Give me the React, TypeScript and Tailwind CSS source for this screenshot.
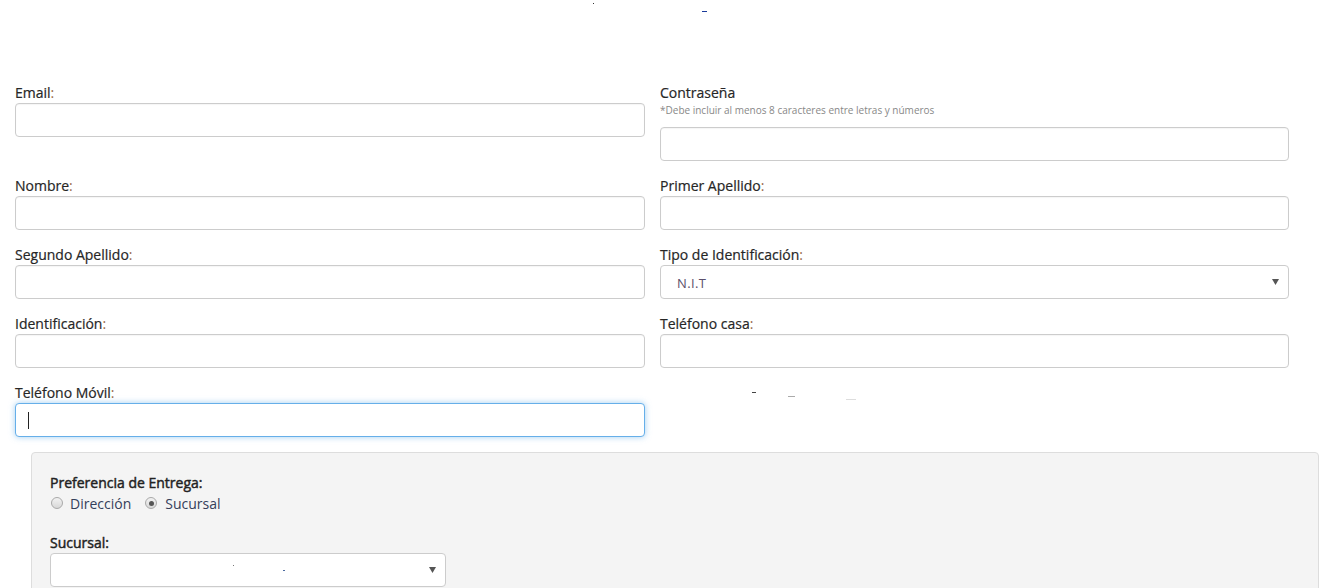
import React from "react";

const Arrow = () => (
  <svg width="7" height="6" viewBox="0 0 7 6" className="shrink-0">
    <path d="M0 0 L7 0 L3.5 6 Z" fill="#555" />
  </svg>
);

const Label = ({ text, colon = true }: { text: string; colon?: boolean }) => (
  <div className="h-[20px] leading-[20px] text-[14px] text-[#262626] [-webkit-text-stroke:0.2px_#262626]">
    {text}
    {colon && <span className="text-[#9a6b4b] [-webkit-text-stroke:0px]">:</span>}
  </div>
);

const Input = () => (
  <div className="h-[34px] w-full rounded-[4px] border border-[#ccc] bg-white shadow-[inset_0_1px_1px_rgba(0,0,0,0.04)]" />
);

const Field = ({ label, colon = true }: { label: string; colon?: boolean }) => (
  <div>
    <Label text={label} colon={colon} />
    <Input />
  </div>
);

export default function App() {
  return (
    <div
      className="w-[1336px] h-[588px] overflow-hidden bg-white"
      style={{ fontFamily: '"Open Sans", "Noto Sans", sans-serif' }}
    >
      {/* top stray marks */}
      <div className="h-[83px] flex items-start pt-[3px]">
        <div className="ml-[593px] w-[1px] h-[1px] bg-[#333]" />
        <div className="ml-[108px] mt-[8px] w-[5px] h-[1px] bg-[#1a3a9a]" />
      </div>

      <div className="pl-[15px] grid grid-cols-[630px_629px] gap-x-[15px] gap-y-[15px] items-start">
        <Field label="Email" />
        <div>
          <Label text="Contraseña" colon={false} />
          <div className="text-[10px] leading-[14px] text-[#888] mb-[10px]">
            *Debe incluir al menos 8 caracteres entre letras y números
          </div>
          <Input />
        </div>

        <Field label="Nombre" />
        <Field label="Primer Apellido" />

        <Field label="Segundo Apellido" />
        <div>
          <Label text="Tipo de Identificación" />
          <div className="h-[34px] w-full rounded-[4px] border border-[#ccc] bg-white flex items-center pl-[16px] pr-[9px] justify-between">
            <span className="mt-[3px] text-[13px] text-[#5b4f6b] tracking-[0.4px]">N.I.T</span>
            <Arrow />
          </div>
        </div>

        <Field label="Identificación" />
        <Field label="Teléfono casa" />

        <div>
          <Label text="Teléfono Móvil" />
          <div className="h-[34px] w-full rounded-[4px] border border-[#66afe9] bg-white shadow-[0_0_6px_rgba(102,175,233,0.6)] flex items-center pl-[12px]">
            <div className="w-[1px] h-[17px] bg-[#222]" />
          </div>
        </div>
        <div className="h-[20px] flex items-start">
          <div className="ml-[92px] mt-[9px] w-[4px] h-[1px] bg-[#444]" />
          <div className="ml-[32px] mt-[13px] w-[7px] h-[1px] bg-[#aaa]" />
          <div className="ml-[51px] mt-[16px] w-[10px] h-[1px] bg-[#ddd]" />
        </div>
      </div>

      <div className="mt-[15px] ml-[31px] w-[1288px] h-[200px] rounded-[4px] border border-[#ddd] bg-[#f4f4f4] px-[18px] pt-[20px]">
        <div className="h-[20px] leading-[20px] text-[14px] text-[#222] [-webkit-text-stroke:0.45px_#222]">
          Preferencia de Entrega:
        </div>
        <div className="h-[20px] flex items-center text-[14px] text-[#34405a]">
          <span className="w-[12px] h-[12px] rounded-full border border-[#a9a9a9] bg-gradient-to-b from-[#f2f2f2] to-[#d8d8d8] ml-[1px]" />
          <span className="ml-[7px]">Dirección</span>
          <span className="ml-[14px] w-[12px] h-[12px] rounded-full border border-[#a9a9a9] bg-gradient-to-b from-[#f2f2f2] to-[#d8d8d8] flex items-center justify-center">
            <span className="w-[5px] h-[5px] rounded-full bg-[#555]" />
          </span>
          <span className="ml-[8px]">Sucursal</span>
        </div>
        <div className="mt-[20px] h-[20px] leading-[20px] text-[14px] text-[#222] [-webkit-text-stroke:0.45px_#222]">
          Sucursal:
        </div>
        <div className="h-[34px] w-[396px] rounded-[4px] border border-[#ccc] bg-white flex items-center pr-[9px] justify-between">
          <div className="flex items-start h-[10px]">
            <div className="ml-[182px] w-[1px] h-[1px] bg-[#777]" />
            <div className="ml-[49px] mt-[5px] w-[2px] h-[1px] bg-[#4a6aa0]" />
          </div>
          <Arrow />
        </div>
      </div>
    </div>
  );
}
